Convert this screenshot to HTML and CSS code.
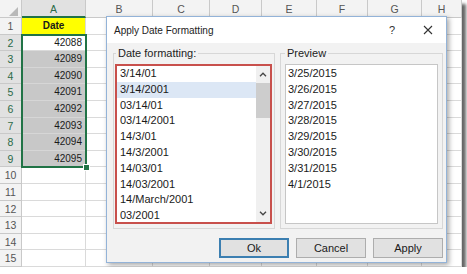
FILE: index.html
```html
<!DOCTYPE html>
<html lang="en">
<head>
  <meta charset="UTF-8" />
  <title>Apply Date Formatting</title>
  <link rel="stylesheet" href="styles.css">
</head>
<body>
  <div class="sheet">
    <div class="grid">
      <div class="corner"><svg width="22" height="18" viewBox="0 0 22 18"><polygon points="18,7 18,16 9,16" fill="#b9b9b9"/></svg></div>
      <div class="hd sel">A</div><div class="hd">B</div><div class="hd">C</div><div class="hd">D</div><div class="hd">E</div><div class="hd">F</div><div class="hd">G</div><div class="hd">H</div>

      <div class="rh">1</div><div class="c head">Date</div><div class="c"></div><div class="c"></div><div class="c"></div><div class="c"></div><div class="c"></div><div class="c"></div><div class="c"></div>
      <div class="rh sel">2</div><div class="c num">42088</div><div class="c"></div><div class="c"></div><div class="c"></div><div class="c"></div><div class="c"></div><div class="c"></div><div class="c"></div>
      <div class="rh sel">3</div><div class="c num shade">42089</div><div class="c"></div><div class="c"></div><div class="c"></div><div class="c"></div><div class="c"></div><div class="c"></div><div class="c"></div>
      <div class="rh sel">4</div><div class="c num shade">42090</div><div class="c"></div><div class="c"></div><div class="c"></div><div class="c"></div><div class="c"></div><div class="c"></div><div class="c"></div>
      <div class="rh sel">5</div><div class="c num shade">42091</div><div class="c"></div><div class="c"></div><div class="c"></div><div class="c"></div><div class="c"></div><div class="c"></div><div class="c"></div>
      <div class="rh sel">6</div><div class="c num shade">42092</div><div class="c"></div><div class="c"></div><div class="c"></div><div class="c"></div><div class="c"></div><div class="c"></div><div class="c"></div>
      <div class="rh sel">7</div><div class="c num shade">42093</div><div class="c"></div><div class="c"></div><div class="c"></div><div class="c"></div><div class="c"></div><div class="c"></div><div class="c"></div>
      <div class="rh sel">8</div><div class="c num shade">42094</div><div class="c"></div><div class="c"></div><div class="c"></div><div class="c"></div><div class="c"></div><div class="c"></div><div class="c"></div>
      <div class="rh sel">9</div><div class="c num shade">42095</div><div class="c"></div><div class="c"></div><div class="c"></div><div class="c"></div><div class="c"></div><div class="c"></div><div class="c"></div>
      <div class="rh">10</div><div class="c"></div><div class="c"></div><div class="c"></div><div class="c"></div><div class="c"></div><div class="c"></div><div class="c"></div><div class="c"></div>
      <div class="rh">11</div><div class="c"></div><div class="c"></div><div class="c"></div><div class="c"></div><div class="c"></div><div class="c"></div><div class="c"></div><div class="c"></div>
      <div class="rh">12</div><div class="c"></div><div class="c"></div><div class="c"></div><div class="c"></div><div class="c"></div><div class="c"></div><div class="c"></div><div class="c"></div>
      <div class="rh">13</div><div class="c"></div><div class="c"></div><div class="c"></div><div class="c"></div><div class="c"></div><div class="c"></div><div class="c"></div><div class="c"></div>
      <div class="rh">14</div><div class="c"></div><div class="c"></div><div class="c"></div><div class="c"></div><div class="c"></div><div class="c"></div><div class="c"></div><div class="c"></div>
      <div class="rh">15</div><div class="c"></div><div class="c"></div><div class="c"></div><div class="c"></div><div class="c"></div><div class="c"></div><div class="c"></div><div class="c"></div>
    </div>

    <div class="selection"><span class="handle"></span></div>

    <div class="dialog">
      <div class="titlebar">
        <span class="title">Apply Date Formatting</span>
        <span class="help">?</span>
        <span class="close"><svg width="10" height="10" viewBox="0 0 10 10"><path d="M1 1 L9 9 M9 1 L1 9" stroke="#333" stroke-width="1.1" fill="none"/></svg></span>
      </div>
      <div class="body">
        <div class="groups">
          <fieldset class="group formats">
            <legend>Date formatting:</legend>
            <div class="listbox picked">
              <ul class="items">
                <li>3/14/01</li>
                <li class="current">3/14/2001</li>
                <li>03/14/01</li>
                <li>03/14/2001</li>
                <li>14/3/01</li>
                <li>14/3/2001</li>
                <li>14/03/01</li>
                <li>14/03/2001</li>
                <li>14/March/2001</li>
                <li>03/2001</li>
              </ul>
              <div class="scrollbar">
                <span class="arrow"><svg width="8" height="5" viewBox="0 0 8 5"><polyline points="1,4.2 4,1.2 7,4.2" stroke="#444" stroke-width="1.3" fill="none"/></svg></span>
                <span class="thumb"></span>
                <span class="track"></span>
                <span class="arrow"><svg width="8" height="5" viewBox="0 0 8 5"><polyline points="1,0.8 4,3.8 7,0.8" stroke="#444" stroke-width="1.3" fill="none"/></svg></span>
              </div>
            </div>
          </fieldset>
          <fieldset class="group preview">
            <legend>Preview</legend>
            <ul class="listbox items plain">
              <li>3/25/2015</li>
              <li>3/26/2015</li>
              <li>3/27/2015</li>
              <li>3/28/2015</li>
              <li>3/29/2015</li>
              <li>3/30/2015</li>
              <li>3/31/2015</li>
              <li>4/1/2015</li>
            </ul>
          </fieldset>
        </div>
        <div class="buttons">
          <button class="btn default">Ok</button>
          <button class="btn">Cancel</button>
          <button class="btn">Apply</button>
        </div>
      </div>
    </div>
  </div>
</body>
</html>
```

FILE: styles.css
```css
body {
  margin: 0;
  background-color: #fff;
  font-family: 'Liberation Sans', Arial, sans-serif;
  color: #1a1a1a;
}
.sheet {
  position: relative;
  width: 462px;
  height: 267px;
  overflow: hidden;
  background-color: #fff;
  box-shadow: 4px 4px 3px rgba(0, 0, 0, 0.6);
}
.grid {
  display: grid;
  grid-template-columns: 22px 64px 67px 57px 52px 55px 51px 54px 40px;
  grid-template-rows: 18px repeat(15, 16.6px);
  font-size: 10px;
}
.grid > div {
  box-sizing: border-box;
  border-right: 1px solid #dadada;
  border-bottom: 1px solid #dadada;
  overflow: hidden;
  white-space: nowrap;
}
.grid .corner {
  background-color: #f3f3f3;
  border-color: #c9c9c9;
}
.corner svg {
  display: block;
}
.hd {
  background-color: #f3f3f3;
  border-color: #c9c9c9 !important;
  color: #555;
  text-align: center;
  line-height: 18px;
  font-size: 10.5px;
}
.hd.sel {
  background-color: #e1e1e1;
  color: #2b6a48;
  border-bottom: 2px solid #217346 !important;
}
.rh {
  background-color: #f3f3f3;
  border-color: #c9c9c9 !important;
  color: #555;
  text-align: center;
  line-height: 16.6px;
  font-size: 10.5px;
}
.rh.sel {
  background-color: #e1e1e1;
  color: #2b6a48;
}
.c {
  line-height: 16px;
}
.c.head {
  background-color: #ffff00;
  font-weight: bold;
  text-align: center;
}
.c.num {
  text-align: right;
  padding-right: 3px;
}
.c.shade {
  background-color: #c8c8c8;
  border-color: #d6d6d6;
}
.selection {
  position: absolute;
  left: 21px;
  top: 33.6px;
  width: 62px;
  height: 130.8px;
  border: 2px solid #217346;
}
.handle {
  position: absolute;
  right: -5px;
  bottom: -5px;
  width: 5px;
  height: 5px;
  background-color: #217346;
  border: 1px solid #fff;
}

/* dialog */
.dialog {
  position: absolute;
  left: 106px;
  top: 16px;
  width: 339px;
  height: 245px;
  border: 1px solid #93b3d8;
  background-color: #f2f2f2;
  box-shadow: 2px 2px 5px rgba(0, 0, 0, 0.35);
  display: flex;
  flex-direction: column;
  font-size: 11px;
}
.titlebar {
  height: 26px;
  background-color: #fff;
  display: flex;
  align-items: center;
  padding-left: 7px;
}
.title {
  flex: 1;
  font-size: 10px;
  color: #222;
}
.help {
  width: 12px;
  text-align: center;
  font-size: 11px;
  color: #333;
}
.close {
  width: 12px;
  margin: 0 12px 0 24px;
  display: flex;
  justify-content: center;
}
.close svg {
  display: block;
}
.body {
  padding: 4px 3px 0 6px;
}
.groups {
  display: flex;
  gap: 5px;
}
.group {
  margin: 0;
  min-width: 0;
  border: 1px solid #d7d7d7;
}
.group legend {
  padding: 0 2px;
  margin-left: 1px;
  line-height: 13px;
  color: #222;
}
.group.formats {
  width: 162px;
  box-sizing: border-box;
  padding: 4px 2px 4px 1px;
}
.group.preview {
  width: 163px;
  box-sizing: border-box;
  padding: 4px 4px 4px 4px;
}
.group.preview legend {
  margin-left: 0;
}
.listbox {
  box-sizing: border-box;
  height: 160px;
  background-color: #fff;
}
.picked {
  width: 157px;
  border: 2px solid #c8504c;
  display: flex;
  overflow: hidden;
}
.items {
  list-style: none;
  margin: 0;
  padding: 0;
  flex: 1;
  overflow: hidden;
}
.items li {
  height: 15.8px;
  line-height: 15.8px;
  padding-left: 3px;
  white-space: nowrap;
}
.items li.current {
  background-color: #dce7f5;
}
.scrollbar {
  width: 14px;
  display: flex;
  flex-direction: column;
  background-color: #f0f0f0;
}
.arrow {
  height: 17px;
  display: flex;
  align-items: center;
  justify-content: center;
}
.thumb {
  height: 35px;
  background-color: #cdcdcd;
}
.track {
  flex: 1;
}
.plain {
  width: 153px;
  border: 1px solid #c6c6c6;
  padding: 1px 0 0 2px;
}
.plain li {
  padding-left: 0;
}
.buttons {
  display: flex;
  justify-content: flex-end;
  gap: 7px;
  margin-top: 9px;
}
.btn {
  width: 70px;
  height: 20px;
  padding: 0;
  border: 1px solid #adadad;
  background-color: #e1e1e1;
  font-family: inherit;
  font-size: 11px;
  color: #1a1a1a;
}
.btn.default {
  border: 2px solid #3c7fb1;
}
```
